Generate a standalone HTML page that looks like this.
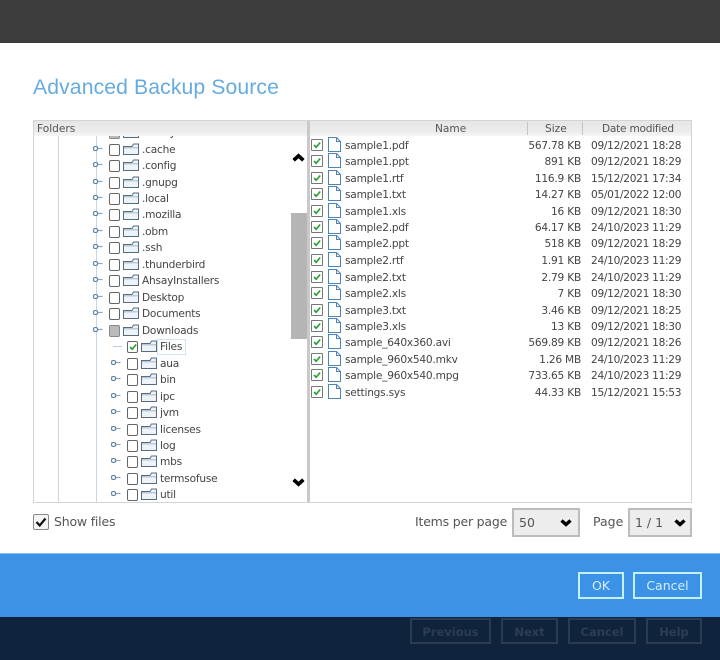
<!DOCTYPE html>
<html><head><meta charset="utf-8">
<style>
html,body{margin:0;padding:0;background:#fff}
body{width:720px;height:660px;position:relative;overflow:hidden;font-family:"DejaVu Sans","Liberation Sans",sans-serif;color:#444;filter:blur(.35px)}
.a{position:absolute}
svg{display:block;overflow:visible}
.r,.f{position:absolute;height:16.5px;line-height:16.5px;font-size:10.6px;white-space:nowrap;letter-spacing:-.22px}
.r i,.f i{position:absolute;display:block;font-style:normal}
.box{width:9px;height:10px;border:1px solid #666;border-radius:2px;background:#fff;top:1.5px}
.gray{background:#bbb;border-color:#888}
.ck{width:12px;height:12px;top:1px;border:1px solid #777;box-sizing:border-box;border-radius:1px;background:#fff}
.ic{top:1px}
.e{top:4px}
.t{top:0}
.sz{right:110px;top:0;text-align:right}
.dt{left:280px;top:0;letter-spacing:-.3px}
.nm{left:34px;top:0}
.btn{position:absolute;box-sizing:border-box;text-align:center;font-size:12.5px}
.w{border:2px solid #c4f1fa;color:#d3eefb;top:572px;height:27px;line-height:24px}
.d{border:2px solid #2b3c50;color:#2c3d53;top:618px;height:26px;line-height:24px;font-size:11.5px;font-weight:bold}
.sel{position:absolute;box-sizing:border-box;top:508px;height:29px;background:#ededed;border:2px solid #bcbcbc;font-size:12.5px;line-height:25px;color:#555;padding-left:5px}
.lb{position:absolute;font-size:12.5px;line-height:16px;color:#555;top:514px;letter-spacing:-.2px}
</style></head>
<body>
<svg width="0" height="0" style="position:absolute">
<defs>
<symbol id="fo" viewBox="0 0 16 12"><path d="M0.5 3.5 H9 L10.5 1 H15.5 V11.5 H0.5 Z" fill="#eef3f8" stroke="#566c80" stroke-width="1"/><path d="M1 4 H15 V5.5 H1Z" fill="#b9cbdb"/></symbol>
<symbol id="fi" viewBox="0 0 13 15"><path d="M0.5 .5 H8.5 L12.5 4.5 V14.5 H0.5 Z M8.5 .5 V4.5 H12.5" fill="#fff" stroke="#4d84b5" stroke-width="1"/></symbol>
<symbol id="cm" viewBox="0 0 12 12"><path d="M2.5 6 L5 8.7 L9.8 3" fill="none" stroke="#2c9e3a" stroke-width="2"/></symbol>
<symbol id="ex" viewBox="0 0 10 5"><path d="M4.5 2.5 H9.5" stroke="#8aa6bf" stroke-width="1.2"/><circle cx="2.5" cy="2.5" r="2.1" fill="#fff" stroke="#5b87ae" stroke-width="1.3"/></symbol>
<symbol id="ch" viewBox="0 0 12 8"><path d="M1.5 1.5 L6 5.5 L10.5 1.5" fill="none" stroke="#000" stroke-width="3.4"/></symbol>
</defs>
</svg>

<div class="a" style="left:0;top:0;width:720px;height:43px;background:#3d3d3d"></div>
<div class="a" style="left:33px;top:73px;font:21.2px/30px 'Liberation Sans',sans-serif;color:#66abe0;letter-spacing:.1px">Advanced Backup Source</div>

<!-- panel -->
<div class="a" style="left:33px;top:120px;width:659px;height:383px;box-sizing:border-box;border:1px solid #d4d4d4"></div>

<!-- tree -->
<div class="a" style="left:34px;top:121px;width:273px;height:381px;overflow:hidden">
 <div class="a" style="left:24px;top:0;width:1px;height:381px;background:#c8d7e6"></div>
 <div class="a" style="left:62px;top:0;width:1px;height:381px;background:#c8d7e6"></div>
 <div class="a" style="left:79px;top:225px;width:9px;height:1px;background:#b9cbdc"></div>
 <div class="r" style="left:0;top:4px;width:270px"><i class="box gray" style="left:75px"></i><i class="ic" style="left:89px"><svg width="16" height="12"><use href="#fo"/></svg></i><i class="t" style="left:108px">.ahsay</i></div>
 <div class="r" style="left:0;top:21px;width:270px"><i class="e" style="left:59px"><svg width="10" height="5"><use href="#ex"/></svg></i><i class="box" style="left:75px"></i><i class="ic" style="left:89px"><svg width="16" height="12"><use href="#fo"/></svg></i><i class="t" style="left:108px">.cache</i></div>
 <div class="r" style="left:0;top:37px;width:270px"><i class="e" style="left:59px"><svg width="10" height="5"><use href="#ex"/></svg></i><i class="box" style="left:75px"></i><i class="ic" style="left:89px"><svg width="16" height="12"><use href="#fo"/></svg></i><i class="t" style="left:108px">.config</i></div>
 <div class="r" style="left:0;top:54px;width:270px"><i class="e" style="left:59px"><svg width="10" height="5"><use href="#ex"/></svg></i><i class="box" style="left:75px"></i><i class="ic" style="left:89px"><svg width="16" height="12"><use href="#fo"/></svg></i><i class="t" style="left:108px">.gnupg</i></div>
 <div class="r" style="left:0;top:70px;width:270px"><i class="e" style="left:59px"><svg width="10" height="5"><use href="#ex"/></svg></i><i class="box" style="left:75px"></i><i class="ic" style="left:89px"><svg width="16" height="12"><use href="#fo"/></svg></i><i class="t" style="left:108px">.local</i></div>
 <div class="r" style="left:0;top:86px;width:270px"><i class="e" style="left:59px"><svg width="10" height="5"><use href="#ex"/></svg></i><i class="box" style="left:75px"></i><i class="ic" style="left:89px"><svg width="16" height="12"><use href="#fo"/></svg></i><i class="t" style="left:108px">.mozilla</i></div>
 <div class="r" style="left:0;top:103px;width:270px"><i class="e" style="left:59px"><svg width="10" height="5"><use href="#ex"/></svg></i><i class="box" style="left:75px"></i><i class="ic" style="left:89px"><svg width="16" height="12"><use href="#fo"/></svg></i><i class="t" style="left:108px">.obm</i></div>
 <div class="r" style="left:0;top:119px;width:270px"><i class="e" style="left:59px"><svg width="10" height="5"><use href="#ex"/></svg></i><i class="box" style="left:75px"></i><i class="ic" style="left:89px"><svg width="16" height="12"><use href="#fo"/></svg></i><i class="t" style="left:108px">.ssh</i></div>
 <div class="r" style="left:0;top:136px;width:270px"><i class="e" style="left:59px"><svg width="10" height="5"><use href="#ex"/></svg></i><i class="box" style="left:75px"></i><i class="ic" style="left:89px"><svg width="16" height="12"><use href="#fo"/></svg></i><i class="t" style="left:108px">.thunderbird</i></div>
 <div class="r" style="left:0;top:152px;width:270px"><i class="e" style="left:59px"><svg width="10" height="5"><use href="#ex"/></svg></i><i class="box" style="left:75px"></i><i class="ic" style="left:89px"><svg width="16" height="12"><use href="#fo"/></svg></i><i class="t" style="left:108px">AhsayInstallers</i></div>
 <div class="r" style="left:0;top:169px;width:270px"><i class="e" style="left:59px"><svg width="10" height="5"><use href="#ex"/></svg></i><i class="box" style="left:75px"></i><i class="ic" style="left:89px"><svg width="16" height="12"><use href="#fo"/></svg></i><i class="t" style="left:108px">Desktop</i></div>
 <div class="r" style="left:0;top:185px;width:270px"><i class="e" style="left:59px"><svg width="10" height="5"><use href="#ex"/></svg></i><i class="box" style="left:75px"></i><i class="ic" style="left:89px"><svg width="16" height="12"><use href="#fo"/></svg></i><i class="t" style="left:108px">Documents</i></div>
 <div class="r" style="left:0;top:202px;width:270px"><i class="e" style="left:59px"><svg width="10" height="5"><use href="#ex"/></svg></i><i class="box gray" style="left:75px"></i><i class="ic" style="left:89px"><svg width="16" height="12"><use href="#fo"/></svg></i><i class="t" style="left:108px">Downloads</i></div>
 <div class="r" style="left:0;top:218px;width:270px"><i class="box" style="left:93px"><svg width="10" height="10"><use href="#cm"/></svg></i><i class="ic" style="left:107px"><svg width="16" height="12"><use href="#fo"/></svg></i><i class="t" style="left:123px;top:0;height:14px;line-height:14px;padding:0 2px;width:23px;border:1px solid #cfe6f3">Files</i></div>
 <div class="r" style="left:0;top:235px;width:270px"><i class="e" style="left:77px"><svg width="10" height="5"><use href="#ex"/></svg></i><i class="box" style="left:93px"></i><i class="ic" style="left:107px"><svg width="16" height="12"><use href="#fo"/></svg></i><i class="t" style="left:126px">aua</i></div>
 <div class="r" style="left:0;top:251px;width:270px"><i class="e" style="left:77px"><svg width="10" height="5"><use href="#ex"/></svg></i><i class="box" style="left:93px"></i><i class="ic" style="left:107px"><svg width="16" height="12"><use href="#fo"/></svg></i><i class="t" style="left:126px">bin</i></div>
 <div class="r" style="left:0;top:268px;width:270px"><i class="e" style="left:77px"><svg width="10" height="5"><use href="#ex"/></svg></i><i class="box" style="left:93px"></i><i class="ic" style="left:107px"><svg width="16" height="12"><use href="#fo"/></svg></i><i class="t" style="left:126px">ipc</i></div>
 <div class="r" style="left:0;top:284px;width:270px"><i class="e" style="left:77px"><svg width="10" height="5"><use href="#ex"/></svg></i><i class="box" style="left:93px"></i><i class="ic" style="left:107px"><svg width="16" height="12"><use href="#fo"/></svg></i><i class="t" style="left:126px">jvm</i></div>
 <div class="r" style="left:0;top:301px;width:270px"><i class="e" style="left:77px"><svg width="10" height="5"><use href="#ex"/></svg></i><i class="box" style="left:93px"></i><i class="ic" style="left:107px"><svg width="16" height="12"><use href="#fo"/></svg></i><i class="t" style="left:126px">licenses</i></div>
 <div class="r" style="left:0;top:317px;width:270px"><i class="e" style="left:77px"><svg width="10" height="5"><use href="#ex"/></svg></i><i class="box" style="left:93px"></i><i class="ic" style="left:107px"><svg width="16" height="12"><use href="#fo"/></svg></i><i class="t" style="left:126px">log</i></div>
 <div class="r" style="left:0;top:333px;width:270px"><i class="e" style="left:77px"><svg width="10" height="5"><use href="#ex"/></svg></i><i class="box" style="left:93px"></i><i class="ic" style="left:107px"><svg width="16" height="12"><use href="#fo"/></svg></i><i class="t" style="left:126px">mbs</i></div>
 <div class="r" style="left:0;top:350px;width:270px"><i class="e" style="left:77px"><svg width="10" height="5"><use href="#ex"/></svg></i><i class="box" style="left:93px"></i><i class="ic" style="left:107px"><svg width="16" height="12"><use href="#fo"/></svg></i><i class="t" style="left:126px">termsofuse</i></div>
 <div class="r" style="left:0;top:366px;width:270px"><i class="e" style="left:77px"><svg width="10" height="5"><use href="#ex"/></svg></i><i class="box" style="left:93px"></i><i class="ic" style="left:107px"><svg width="16" height="12"><use href="#fo"/></svg></i><i class="t" style="left:126px">util</i></div>
</div>

<!-- scrollbar -->
<div class="a" style="left:291px;top:213px;width:16px;height:126px;background:#b5b5b5"></div>
<div class="a" style="left:292px;top:153px"><svg width="13" height="9" viewBox="0 0 12 8" style="transform:scaleY(-1)"><use href="#ch"/></svg></div>
<div class="a" style="left:292px;top:478px"><svg width="13" height="9" viewBox="0 0 12 8"><use href="#ch"/></svg></div>

<!-- headers -->
<div class="a" style="left:34px;top:121px;width:273px;height:15px;background:linear-gradient(#e6e6e6,#ececec 70%,#f6f6f6);font-size:10.6px;line-height:17px;color:#555;text-indent:3px">Folders</div>
<div class="a" style="left:310px;top:121px;width:381px;height:15px;background:linear-gradient(#e6e6e6,#ececec 70%,#f6f6f6);font-size:10.6px;line-height:17px;color:#555">
 <span class="a" style="left:125px;top:0">Name</span>
 <span class="a" style="left:235px;top:0">Size</span>
 <span class="a" style="left:292px;top:0;letter-spacing:-.25px">Date modified</span>
 <span class="a" style="left:217px;top:1px;width:1px;height:13px;background:#c4c4c4"></span>
 <span class="a" style="left:272px;top:1px;width:1px;height:13px;background:#c4c4c4"></span>
</div>
<div class="a" style="left:307px;top:121px;width:3px;height:381px;background:#c9c9c9"></div>

<!-- file list -->
<div class="a" style="left:311px;top:137px;width:380px;height:365px;overflow:hidden">
 <div class="f" style="left:0;top:1px;width:380px"><i class="ck" style="left:0"><svg width="10" height="10"><use href="#cm"/></svg></i><i style="left:17px;top:-1px"><svg width="13" height="15"><use href="#fi"/></svg></i><i class="nm">sample1.pdf</i><i class="sz">567.78 KB</i><i class="dt">09/12/2021 18:28</i></div>
 <div class="f" style="left:0;top:17px;width:380px"><i class="ck" style="left:0"><svg width="10" height="10"><use href="#cm"/></svg></i><i style="left:17px;top:-1px"><svg width="13" height="15"><use href="#fi"/></svg></i><i class="nm">sample1.ppt</i><i class="sz">891 KB</i><i class="dt">09/12/2021 18:29</i></div>
 <div class="f" style="left:0;top:34px;width:380px"><i class="ck" style="left:0"><svg width="10" height="10"><use href="#cm"/></svg></i><i style="left:17px;top:-1px"><svg width="13" height="15"><use href="#fi"/></svg></i><i class="nm">sample1.rtf</i><i class="sz">116.9 KB</i><i class="dt">15/12/2021 17:34</i></div>
 <div class="f" style="left:0;top:50px;width:380px"><i class="ck" style="left:0"><svg width="10" height="10"><use href="#cm"/></svg></i><i style="left:17px;top:-1px"><svg width="13" height="15"><use href="#fi"/></svg></i><i class="nm">sample1.txt</i><i class="sz">14.27 KB</i><i class="dt">05/01/2022 12:00</i></div>
 <div class="f" style="left:0;top:67px;width:380px"><i class="ck" style="left:0"><svg width="10" height="10"><use href="#cm"/></svg></i><i style="left:17px;top:-1px"><svg width="13" height="15"><use href="#fi"/></svg></i><i class="nm">sample1.xls</i><i class="sz">16 KB</i><i class="dt">09/12/2021 18:30</i></div>
 <div class="f" style="left:0;top:83px;width:380px"><i class="ck" style="left:0"><svg width="10" height="10"><use href="#cm"/></svg></i><i style="left:17px;top:-1px"><svg width="13" height="15"><use href="#fi"/></svg></i><i class="nm">sample2.pdf</i><i class="sz">64.17 KB</i><i class="dt">24/10/2023 11:29</i></div>
 <div class="f" style="left:0;top:99px;width:380px"><i class="ck" style="left:0"><svg width="10" height="10"><use href="#cm"/></svg></i><i style="left:17px;top:-1px"><svg width="13" height="15"><use href="#fi"/></svg></i><i class="nm">sample2.ppt</i><i class="sz">518 KB</i><i class="dt">09/12/2021 18:29</i></div>
 <div class="f" style="left:0;top:116px;width:380px"><i class="ck" style="left:0"><svg width="10" height="10"><use href="#cm"/></svg></i><i style="left:17px;top:-1px"><svg width="13" height="15"><use href="#fi"/></svg></i><i class="nm">sample2.rtf</i><i class="sz">1.91 KB</i><i class="dt">24/10/2023 11:29</i></div>
 <div class="f" style="left:0;top:133px;width:380px"><i class="ck" style="left:0"><svg width="10" height="10"><use href="#cm"/></svg></i><i style="left:17px;top:-1px"><svg width="13" height="15"><use href="#fi"/></svg></i><i class="nm">sample2.txt</i><i class="sz">2.79 KB</i><i class="dt">24/10/2023 11:29</i></div>
 <div class="f" style="left:0;top:149px;width:380px"><i class="ck" style="left:0"><svg width="10" height="10"><use href="#cm"/></svg></i><i style="left:17px;top:-1px"><svg width="13" height="15"><use href="#fi"/></svg></i><i class="nm">sample2.xls</i><i class="sz">7 KB</i><i class="dt">09/12/2021 18:30</i></div>
 <div class="f" style="left:0;top:166px;width:380px"><i class="ck" style="left:0"><svg width="10" height="10"><use href="#cm"/></svg></i><i style="left:17px;top:-1px"><svg width="13" height="15"><use href="#fi"/></svg></i><i class="nm">sample3.txt</i><i class="sz">3.46 KB</i><i class="dt">09/12/2021 18:25</i></div>
 <div class="f" style="left:0;top:182px;width:380px"><i class="ck" style="left:0"><svg width="10" height="10"><use href="#cm"/></svg></i><i style="left:17px;top:-1px"><svg width="13" height="15"><use href="#fi"/></svg></i><i class="nm">sample3.xls</i><i class="sz">13 KB</i><i class="dt">09/12/2021 18:30</i></div>
 <div class="f" style="left:0;top:198px;width:380px"><i class="ck" style="left:0"><svg width="10" height="10"><use href="#cm"/></svg></i><i style="left:17px;top:-1px"><svg width="13" height="15"><use href="#fi"/></svg></i><i class="nm">sample_640x360.avi</i><i class="sz">569.89 KB</i><i class="dt">09/12/2021 18:26</i></div>
 <div class="f" style="left:0;top:215px;width:380px"><i class="ck" style="left:0"><svg width="10" height="10"><use href="#cm"/></svg></i><i style="left:17px;top:-1px"><svg width="13" height="15"><use href="#fi"/></svg></i><i class="nm">sample_960x540.mkv</i><i class="sz">1.26 MB</i><i class="dt">24/10/2023 11:29</i></div>
 <div class="f" style="left:0;top:231px;width:380px"><i class="ck" style="left:0"><svg width="10" height="10"><use href="#cm"/></svg></i><i style="left:17px;top:-1px"><svg width="13" height="15"><use href="#fi"/></svg></i><i class="nm">sample_960x540.mpg</i><i class="sz">733.65 KB</i><i class="dt">24/10/2023 11:29</i></div>
 <div class="f" style="left:0;top:248px;width:380px"><i class="ck" style="left:0"><svg width="10" height="10"><use href="#cm"/></svg></i><i style="left:17px;top:-1px"><svg width="13" height="15"><use href="#fi"/></svg></i><i class="nm">settings.sys</i><i class="sz">44.33 KB</i><i class="dt">15/12/2021 15:53</i></div>
</div>

<!-- options row -->
<div class="a" style="left:33px;top:514px;width:16px;height:16px;box-sizing:border-box;border:1px solid #888;border-radius:2px;background:#f4f4f4"><svg width="14" height="14"><path d="M2.5 7 L5.7 10.5 L11.5 3.5" fill="none" stroke="#111" stroke-width="2.2"/></svg></div>
<div class="lb" style="left:54px">Show files</div>
<div class="lb" style="left:415px">Items per page</div>
<div class="sel" style="left:512px;width:68px">50<svg class="a" style="left:46px;top:9px" width="12" height="8"><use href="#ch"/></svg></div>
<div class="lb" style="left:593px;letter-spacing:0">Page</div>
<div class="sel" style="left:628px;width:64px">1 / 1<svg class="a" style="left:44px;top:9px" width="12" height="8"><use href="#ch"/></svg></div>

<!-- footer -->
<div class="a" style="left:0;top:553px;width:720px;height:64px;background:#3b92e6;border-top:1px solid #7fbdf0;box-sizing:border-box"></div>
<div class="btn w" style="left:578px;width:46px">OK</div>
<div class="btn w" style="left:633px;width:69px">Cancel</div>
<div class="a" style="left:0;top:617px;width:720px;height:43px;background:#10233c"></div>
<div class="btn d" style="left:410px;width:81px">Previous</div>
<div class="btn d" style="left:501px;width:57px">Next</div>
<div class="btn d" style="left:568px;width:68px">Cancel</div>
<div class="btn d" style="left:646px;width:56px">Help</div>
</body></html>
